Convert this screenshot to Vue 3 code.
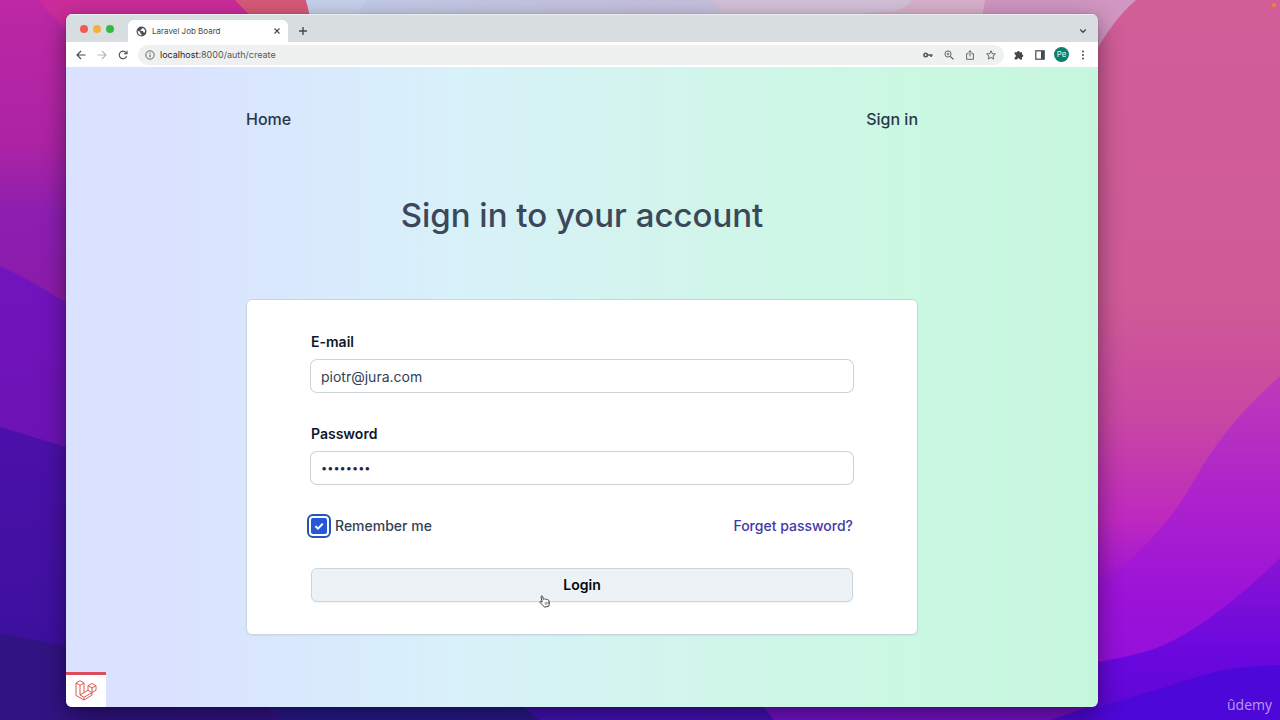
<template>
  <div class="desktop">
    <svg class="wallpaper" viewBox="0 0 1280 720" preserveAspectRatio="none" aria-hidden="true">
      <defs>
        <linearGradient id="wall-left" x1="0" y1="0" x2="0" y2="1">
          <stop offset="0" stop-color="#bd28a4" />
          <stop offset="0.2" stop-color="#ac23a4" />
          <stop offset="0.3" stop-color="#8c1eb0" />
          <stop offset="0.45" stop-color="#8a1aa8" />
          <stop offset="1" stop-color="#5a12b0" />
        </linearGradient>
        <linearGradient id="wall-violet" x1="0" y1="0" x2="0" y2="1">
          <stop offset="0" stop-color="#7214bd" />
          <stop offset="0.4" stop-color="#6c13b4" />
          <stop offset="1" stop-color="#6010b4" />
        </linearGradient>
        <linearGradient id="wall-indigo" x1="0" y1="0" x2="0" y2="1">
          <stop offset="0" stop-color="#4c10aa" />
          <stop offset="1" stop-color="#38109a" />
        </linearGradient>
        <linearGradient id="wall-sky" x1="0" y1="0" x2="1" y2="0">
          <stop offset="0" stop-color="#c3cde8" />
          <stop offset="0.4" stop-color="#c5c1df" />
          <stop offset="1" stop-color="#d0bfd8" />
        </linearGradient>
        <linearGradient id="wall-pink" x1="0" y1="0" x2="0" y2="1">
          <stop offset="0" stop-color="#d15e97" />
          <stop offset="0.42" stop-color="#cf5a97" />
          <stop offset="0.58" stop-color="#c847a2" />
          <stop offset="0.72" stop-color="#be29bf" />
          <stop offset="0.82" stop-color="#9c12d8" />
          <stop offset="1" stop-color="#8610dc" />
        </linearGradient>
        <linearGradient id="wall-magenta" x1="0" y1="0" x2="0" y2="1">
          <stop offset="0" stop-color="#bd3bb8" />
          <stop offset="0.35" stop-color="#ad22cc" />
          <stop offset="0.65" stop-color="#9b12d8" />
          <stop offset="1" stop-color="#8d0edc" />
        </linearGradient>
        <linearGradient id="wall-purple" x1="0" y1="0" x2="0" y2="1">
          <stop offset="0" stop-color="#8a14d2" />
          <stop offset="0.6" stop-color="#6a07de" />
          <stop offset="1" stop-color="#5b08d4" />
        </linearGradient>
      </defs>
      <rect width="1280" height="720" fill="url(#wall-left)" />
      <path d="M38 0H300V30H66Z" fill="#cb2c9b" />
      <path d="M235 0H306L313 24H258Z" fill="#d8597a" />
      <path d="M306 0H1140V80H325Z" fill="url(#wall-sky)" />
      <path d="M306 0H367L352 24H313Z" fill="#c6d1eb" />
      <path d="M714 0H985L981 24H727Z" fill="#d3c1d8" />
      <path d="M848 24Q854 12 880 12Q905 12 912 0H985L981 24Z" fill="#d8b1cb" />
      <path d="M985 0H1140L1099 50L981 24Z" fill="#d196c2" />
      <path d="M0 266Q34 281 80 312V720H0Z" fill="url(#wall-violet)" />
      <path d="M0 427L80 451V720H0Z" fill="url(#wall-indigo)" />
      <path d="M0 633L80 649L290 720H0Z" fill="#321384" />
      <path d="M1136 0Q1112 20 1090 62V720H1280V0Z" fill="url(#wall-pink)" />
      <path d="M1280 376Q1230 420 1200 470Q1160 545 1090 590V720H1280Z" fill="url(#wall-magenta)" />
      <path d="M1280 558Q1195 640 1140 653Q1110 661 1060 668V720H1280Z" fill="url(#wall-purple)" />
      <path d="M80 649L260 700L285 720H80Z" fill="#321384" />
      <path d="M250 690H500L540 720H285Z" fill="#27198c" />
      <path d="M500 690H750L774 720H540Z" fill="#4310b8" />
      <path d="M750 690H1090V706L1050 720H774Z" fill="#7610cc" />
      <path d="M1280 665Q1230 667 1200 676Q1150 693 1050 720H1280Z" fill="#4d07d8" />
    </svg>

    <span class="recording-dot"></span>

    <div class="window">
      <header class="tab-strip">
        <div class="lights">
          <span v-for="light in lights" :key="light" class="light" :class="light"></span>
        </div>
        <div class="tab">
          <svg class="globe" viewBox="0 0 12 12">
            <circle cx="6" cy="6" r="5.4" fill="#4b4f53" />
            <path d="M1.8 5.2L4.6 6.4V7.8L6 9V10.4Q2 10 1.8 5.2M7 1.8L6.8 3.4L5 4V5.4H7.6L8.2 7H9.6Q11 4 7 1.8" fill="#fff" />
          </svg>
          <span class="tab-title">Laravel Job Board</span>
          <button class="icon-button" type="button" aria-label="Close tab">
            <svg width="8" height="8" viewBox="0 0 8 8"><path d="M1.5 1.5L6.5 6.5M6.5 1.5L1.5 6.5" /></svg>
          </button>
        </div>
        <button class="icon-button new-tab" type="button" aria-label="New tab">
          <svg width="10" height="10" viewBox="0 0 10 10"><path d="M5 1V9M1 5H9" stroke-width="1.4" /></svg>
        </button>
        <button class="icon-button tab-search" type="button" aria-label="Search tabs">
          <svg width="8" height="8" viewBox="0 0 8 8"><path d="M1.2 2.5L4 5.3L6.8 2.5" stroke-width="1.3" /></svg>
        </button>
      </header>

      <div class="toolbar">
        <div class="toolbar-group">
          <button class="icon-button" type="button" aria-label="Back">
            <svg width="10" height="10" viewBox="0 0 10 10"><path d="M9.5 5H1.2M5 1L1 5L5 9" /></svg>
          </button>
          <button class="icon-button muted" type="button" aria-label="Forward">
            <svg width="10" height="10" viewBox="0 0 10 10"><path d="M0.5 5H8.8M5 1L9 5L5 9" /></svg>
          </button>
          <button class="icon-button" type="button" aria-label="Reload">
            <svg width="10" height="10" viewBox="0 0 10 10"><path d="M8.6 6.2A3.8 3.8 0 1 1 7.9 2.5L8.8 3.5M9 0.8V3.8H6" /></svg>
          </button>
        </div>
        <div class="address">
          <svg width="10" height="10" viewBox="0 0 10 10">
            <circle cx="5" cy="5" r="4.2" stroke-width="0.9" /><path d="M5 4.4V7.3M5 2.5V3.5" />
          </svg>
          <p class="url"><span class="host">localhost</span>:8000/auth/create</p>
          <div class="address-actions">
            <svg width="10" height="10" viewBox="0 0 10 10">
              <circle cx="2.7" cy="5" r="1.7" stroke-width="1.6" /><path d="M4.5 5H9.6M8.2 5V7" stroke-width="1.6" />
            </svg>
            <svg width="10" height="10" viewBox="0 0 10 10">
              <circle cx="4" cy="4" r="3.1" stroke-width="0.9" /><path d="M6.3 6.3L9.4 9.4" stroke-width="1.2" />
              <path d="M4 2.6V5.4M2.6 4H5.4" stroke-width="0.8" />
            </svg>
            <svg width="10" height="10" viewBox="0 0 10 10">
              <path d="M3.5 3.7H1.6V9.3H8.4V3.7H6.5M5 6.5V0.8M3.2 2.5L5 0.7L6.8 2.5" stroke-width="0.9" />
            </svg>
            <svg width="10" height="10" viewBox="0 0 10 10">
              <path d="M5 0.8L6.2 3.7L9.4 3.9L7 6L7.7 9.1L5 7.4L2.3 9.1L3 6L0.6 3.9L3.8 3.7Z" stroke-width="0.9" />
            </svg>
          </div>
        </div>
        <div class="toolbar-group">
          <button class="icon-button" type="button" aria-label="Extensions">
            <svg width="10" height="10" viewBox="0 0 10 10">
              <path d="M0.6 2.2H3A1.3 1.3 0 1 1 5.6 2.2H8V4.4A1.3 1.3 0 1 1 8 7V9.6H5.7A1.3 1.3 0 0 0 3.1 9.6H0.6V7.2A1.3 1.3 0 0 0 0.6 4.6Z" class="solid" />
            </svg>
          </button>
          <button class="icon-button" type="button" aria-label="Side panel">
            <svg width="10" height="10" viewBox="0 0 10 10">
              <rect x="0.8" y="0.8" width="8.4" height="8.4" stroke-width="1.2" /><path d="M6 1H9V9H6Z" class="solid" />
            </svg>
          </button>
          <span class="avatar">Pe</span>
          <button class="icon-button" type="button" aria-label="Menu">
            <svg width="10" height="10" viewBox="0 0 10 10">
              <circle cx="5" cy="1.5" r="1" class="solid" /><circle cx="5" cy="5" r="1" class="solid" /><circle cx="5" cy="8.5" r="1" class="solid" />
            </svg>
          </button>
        </div>
      </div>

      <main class="page">
        <div class="column">
          <nav class="site-nav">
            <a href="#">Home</a>
            <a href="#">Sign in</a>
          </nav>

          <h1>Sign in to your account</h1>

          <form class="card" @submit.prevent>
            <div class="field">
              <label for="email">E-mail</label>
              <input id="email" v-model="email" type="text" name="email" autocomplete="off" />
            </div>
            <div class="field">
              <label for="password">Password</label>
              <input id="password" v-model="password" type="password" name="password" autocomplete="off" />
            </div>
            <div class="options">
              <div class="remember">
                <span class="checkbox">
                  <input id="remember" v-model="remember" type="checkbox" name="remember" />
                  <svg v-if="remember" viewBox="0 0 16 16"><path d="M4.4 8.2L7 10.6L11.8 5.6" /></svg>
                </span>
                <label for="remember">Remember me</label>
              </div>
              <a class="forgot" href="#">Forget password?</a>
            </div>
            <button class="login" type="submit">
              Login
              <svg class="pointer" width="12" height="13" viewBox="0 0 12 13">
                <path
                  d="M3.1 7.2L2.1 1.9C1.9 0.7 3.3 0.3 3.6 1.5L4.4 4.4C4.7 3.7 5.8 3.7 6.1 4.4C6.7 3.8 7.6 4 7.9 4.7C8.6 4.3 9.5 4.7 9.7 5.5L10.4 8C10.6 9.2 9.7 9.8 9.8 11.2L5.5 12.2C4.9 10.5 2.6 9.8 1.1 7.5C0.5 6.5 1.6 5.9 2.3 6.6Z"
                  fill="#fff" stroke="#2d3238" stroke-width="0.9"
                />
                <path d="M6 7.3L6.6 9.9M7.5 6.9L8.1 9.5M9 6.6L9.4 9" fill="none" stroke="#2d3238" stroke-width="0.6" />
              </svg>
            </button>
          </form>
        </div>

        <div class="debugbar">
          <svg width="24" height="24" viewBox="0 0 24 24">
            <path
              d="M2 4L6 1.7L10 4V13.6L14 11.3V6.7L18 4.4L22 6.7V11.3L18 13.6V16L10 21L2 16.4ZM2 4L6 6.3L10 4M6 6.3V16L10 18.3L18 13.6M10 18.3V21M6 16L10 13.6M14 6.7L18 9L22 6.7M18 9V13.6M14 11.3L18 13.6"
            />
          </svg>
        </div>
      </main>
    </div>

    <span class="watermark">ûdemy</span>
  </div>
</template>

<script setup>
import { ref } from 'vue'

const lights = ['red', 'yellow', 'green']

const email = ref('piotr@jura.com')
const password = ref('password')
const remember = ref(true)
</script>

<style>
body {
  margin: 0;
}
</style>

<style scoped>
.desktop {
  position: relative;
  display: flex;
  box-sizing: border-box;
  min-height: 100vh;
  padding: 14px 182px 13px 66px;
  overflow: hidden;
  background: #8a1aa8;
  font-family: Inter, "Liberation Sans", sans-serif;
}

.wallpaper {
  position: absolute;
  inset: 0;
  width: 100%;
  height: 100%;
}

.recording-dot {
  position: absolute;
  top: 3px;
  right: 4px;
  width: 4px;
  height: 4px;
  border-radius: 50%;
  background: #f08a24;
}

.window {
  position: relative;
  display: flex;
  flex: 1;
  flex-direction: column;
  border-radius: 6px;
  overflow: hidden;
  box-shadow: 0 0 1px rgba(0, 0, 0, 0.6), 0 8px 24px rgba(0, 0, 0, 0.45);
}

.tab-strip {
  display: flex;
  align-items: flex-end;
  height: 28px;
  border-top: 1px solid #eceff1;
  box-sizing: border-box;
  background: #d8dde0;
}

.lights {
  display: flex;
  align-self: center;
  gap: 5px;
  padding: 0 14px;
}

.light {
  width: 8px;
  height: 8px;
  border-radius: 50%;
}

.red {
  background: #ee5c54;
}

.yellow {
  background: #f0b23a;
}

.green {
  background: #32b845;
}

.tab {
  display: flex;
  align-items: center;
  box-sizing: border-box;
  width: 160px;
  height: 22px;
  padding: 0 7px 0 8px;
  border-radius: 6px 6px 0 0;
  background: #fff;
}

.globe {
  width: 11px;
  height: 11px;
  margin-right: 5px;
}

.tab-title {
  flex: 1;
  color: #45494d;
  font-size: 8px;
}

.icon-button {
  display: flex;
  padding: 0;
  border: 0;
  background: none;
  color: #45494d;
}

.icon-button svg,
.address svg {
  fill: none;
  stroke: currentColor;
  stroke-width: 1.1;
}

.icon-button .solid {
  fill: currentColor;
  stroke: none;
}

.muted {
  color: #b4b7ba;
}

.new-tab {
  padding: 0 10px 6px;
}

.tab-search {
  margin-left: auto;
  padding: 0 11px 7px;
}

.toolbar {
  display: flex;
  align-items: center;
  height: 25px;
  padding: 0 10px;
  background: #fff;
}

.toolbar-group {
  display: flex;
  align-items: center;
  gap: 11px;
}

.address {
  display: flex;
  flex: 1;
  align-items: center;
  height: 20px;
  margin: 0 10px;
  padding: 0 8px 0 7px;
  border-radius: 10px;
  background: #eff1f1;
  color: #54585c;
}

.url {
  flex: 1;
  margin: 0 0 0 5px;
  font-size: 9px;
}

.host {
  color: #202327;
}

.address-actions {
  display: flex;
  gap: 11px;
}

.avatar {
  width: 15px;
  height: 15px;
  margin: 0 -2px;
  border-radius: 50%;
  background: #08806c;
  color: #e3f3ef;
  font-size: 8px;
  line-height: 15px;
  text-align: center;
}

.page {
  position: relative;
  flex: 1;
  padding: 40px 24px 72px;
  background: linear-gradient(to right, #dae2ff 10%, #d8f1fa 38%, #d1f5ea 62%, #caf8e2 82%, #c7f6df);
}

.column {
  max-width: 672px;
  margin: 0 auto;
}

.site-nav {
  display: flex;
  justify-content: space-between;
  margin-bottom: 64px;
  font-size: 16px;
  font-weight: 500;
  line-height: 24px;
}

.site-nav a {
  color: #29364a;
  text-decoration: none;
}

h1 {
  margin: 0 0 64px;
  color: #3a4859;
  font-size: 33px;
  font-weight: 500;
  line-height: 40px;
  text-align: center;
}

.card {
  padding: 32px 64px;
  border: 1px solid #cbd5e1;
  border-radius: 6px;
  background: #fff;
  box-shadow: 0 1px 2px rgba(0, 0, 0, 0.06);
  font-size: 14px;
  line-height: 20px;
}

.field {
  margin-bottom: 32px;
}

.field label {
  display: block;
  margin-bottom: 8px;
  color: #0f172a;
  font-weight: 600;
}

.field input {
  display: block;
  box-sizing: border-box;
  width: 100%;
  height: 32px;
  padding: 6px 10px;
  border: 0;
  border-radius: 6px;
  outline: none;
  background: #fff;
  box-shadow: 0 0 0 1px #cdd3da;
  color: #334155;
  font: inherit;
}

.field input[type='password'] {
  color: #1e293b;
  font-size: 11px;
}

.options,
.remember {
  display: flex;
  align-items: center;
}

.options {
  justify-content: space-between;
  margin-bottom: 32px;
  font-weight: 500;
}

.remember {
  gap: 8px;
  color: #334155;
}

.checkbox {
  display: grid;
}

.checkbox input,
.checkbox svg {
  grid-area: 1 / 1;
  width: 16px;
  height: 16px;
}

.checkbox input {
  margin: 0;
  border-radius: 2px;
  outline: 2px solid #2454b4;
  outline-offset: 2px;
  background: #fff;
  appearance: none;
}

.checkbox input:checked {
  background: #2457d9;
}

.checkbox svg {
  fill: none;
  stroke: #fff;
  stroke-width: 2;
  pointer-events: none;
}

.forgot {
  color: #4338a8;
  text-decoration: none;
}

.login {
  position: relative;
  width: 100%;
  padding: 6px 10px;
  border: 1px solid #cbd5dc;
  border-radius: 6px;
  background: #edf2f7;
  box-shadow: 0 1px 2px rgba(0, 0, 0, 0.05);
  color: #05070a;
  font: inherit;
  font-weight: 600;
}

.pointer {
  position: absolute;
  top: 26px;
  left: 42%;
}

.debugbar {
  position: absolute;
  bottom: 0;
  left: 0;
  display: grid;
  place-items: center;
  width: 40px;
  height: 32px;
  border-top: 3px solid #dc4d5c;
  background: #fff;
}

.debugbar svg {
  fill: none;
  stroke: #dc5a4e;
  stroke-width: 1;
}

.watermark {
  position: absolute;
  right: 8px;
  bottom: 5px;
  color: rgba(255, 255, 255, 0.6);
  font-family: "Open Sans", sans-serif;
  font-size: 14px;
  line-height: 20px;
}
</style>
